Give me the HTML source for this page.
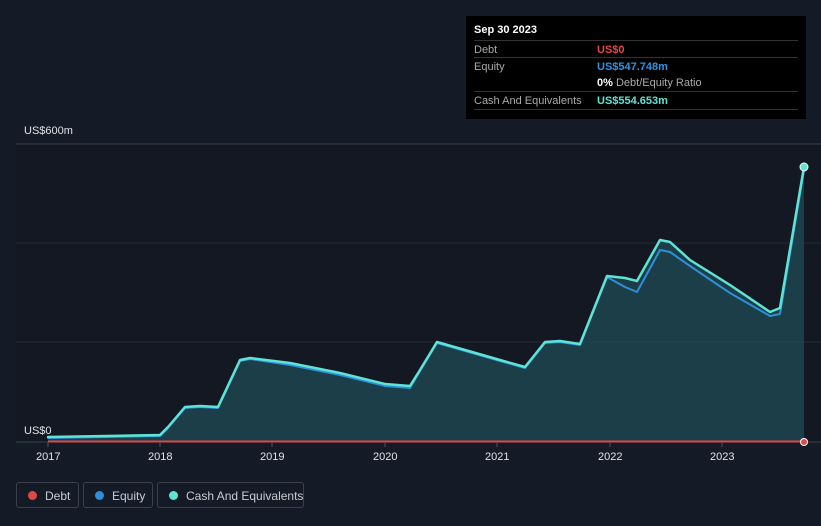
<!DOCTYPE html>
<html><head><style>
body{margin:0;width:821px;height:526px;background:#151b26;font-family:"Liberation Sans",sans-serif;overflow:hidden;position:relative}
.tt{position:absolute;left:466px;top:16px;width:340px;height:103px;background:#000;color:#fff;font-size:11px}
.tt .r{position:absolute;left:8px;right:8px;border-top:1px solid #333;height:17px}
.tt span{position:absolute;top:3px;white-space:nowrap}
.lg{position:absolute;top:482px;height:26px;border:1px solid #3a404c;border-radius:3px;color:#c8ccd2;font-size:12px;line-height:26px;box-sizing:border-box;white-space:nowrap}
.lg i{position:absolute;left:11px;top:8px;width:9px;height:9px;border-radius:50%}
.ax{position:absolute;top:451px;color:#e0e3e8;font-size:11px}
</style></head><body>
<svg width="821" height="526" style="position:absolute;left:0;top:0">
<rect x="16" y="144" width="805" height="298" fill="#131822"/>
<line x1="16" x2="821" y1="144" y2="144" stroke="#3a404a"/>
<line x1="16" x2="821" y1="243" y2="243" stroke="#262c36"/>
<line x1="16" x2="821" y1="342" y2="342" stroke="#262c36"/>
<line x1="16" x2="821" y1="442" y2="442" stroke="#3a404a"/>
<path d="M48,437 L160,435 168,427 185,407 200,406 218,407 240,360 250,358 290,363 340,373 385,384 410,386 420,370 437,342 465,350 500,360 525,367 545,342 560,341 580,344 607,276 625,278 637,281 660,240 670,242 690,260 730,285 770,312 780,308 804,167 L804,442 L48,442Z" fill="#1e4550" opacity="0.85"/>
<g fill="none" stroke-linejoin="round" stroke-linecap="round">
<path d="M48,438 L160,436 168,428 185,408 200,407 218,408 240,361 250,359 290,365 340,375 385,386 410,388 420,371 437,343 465,351 500,361 525,368 545,343 560,342 580,345 607,277 625,287 637,292 660,250 670,252 690,266 730,293 770,316 780,314 804,170" stroke="#2e8fd8" stroke-width="2"/>
<path d="M48,437 L160,435 168,427 185,407 200,406 218,407 240,360 250,358 290,363 340,373 385,384 410,386 420,370 437,342 465,350 500,360 525,367 545,342 560,341 580,344 607,276 625,278 637,281 660,240 670,242 690,260 730,285 770,312 780,308 804,167" stroke="#5fe3d3" stroke-width="2.5"/>
</g>
<line x1="48" x2="804" y1="441.5" y2="441.5" stroke="#e04848" stroke-width="2"/>
<circle cx="804" cy="167" r="4" fill="#5fe3d3" stroke="#fff" stroke-width="1"/>
<circle cx="804" cy="442" r="3.5" fill="#e04848" stroke="#fff" stroke-width="1"/>
<g stroke="#555" ><line x1="48" x2="48" y1="442" y2="447"/><line x1="160" x2="160" y1="442" y2="447"/><line x1="272" x2="272" y1="442" y2="447"/><line x1="385" x2="385" y1="442" y2="447"/><line x1="497" x2="497" y1="442" y2="447"/><line x1="610" x2="610" y1="442" y2="447"/><line x1="722" x2="722" y1="442" y2="447"/></g>
</svg>
<div style="position:absolute;left:24px;top:125px;color:#e0e3e8;font-size:11px">US$600m</div>
<div style="position:absolute;left:24px;top:425px;color:#e0e3e8;font-size:11px">US$0</div>
<div class="ax" style="left:36px">2017</div><div class="ax" style="left:148px">2018</div><div class="ax" style="left:260px">2019</div><div class="ax" style="left:373px">2020</div><div class="ax" style="left:485px">2021</div><div class="ax" style="left:598px">2022</div><div class="ax" style="left:710px">2023</div>
<div class="tt">
<div style="position:absolute;left:8px;top:8px;font-weight:bold">Sep 30 2023</div>
<div class="r" style="top:24px"><span style="color:#aaa">Debt</span><span style="left:123px;color:#e84545;font-weight:bold">US$0</span></div>
<div class="r" style="top:41px"><span style="color:#aaa">Equity</span><span style="left:123px;color:#2e93e0;font-weight:bold">US$547.748m</span></div>
<div class="r" style="top:58px;border:0"><span style="left:123px;color:#aaa"><b style="color:#fff">0%</b> Debt/Equity Ratio</span></div>
<div class="r" style="top:75px"><span style="color:#aaa">Cash And Equivalents</span><span style="left:123px;color:#5fe3d3;font-weight:bold">US$554.653m</span></div>
<div class="r" style="top:93px;height:0"></div>
</div>
<div class="lg" style="left:16px;width:63px"><i style="background:#e04848"></i><span style="position:absolute;left:28px">Debt</span></div>
<div class="lg" style="left:83px;width:70px"><i style="background:#2e8fd8"></i><span style="position:absolute;left:28px">Equity</span></div>
<div class="lg" style="left:157px;width:147px"><i style="background:#5fe3d3"></i><span style="position:absolute;left:28px">Cash And Equivalents</span></div>
</body></html>
